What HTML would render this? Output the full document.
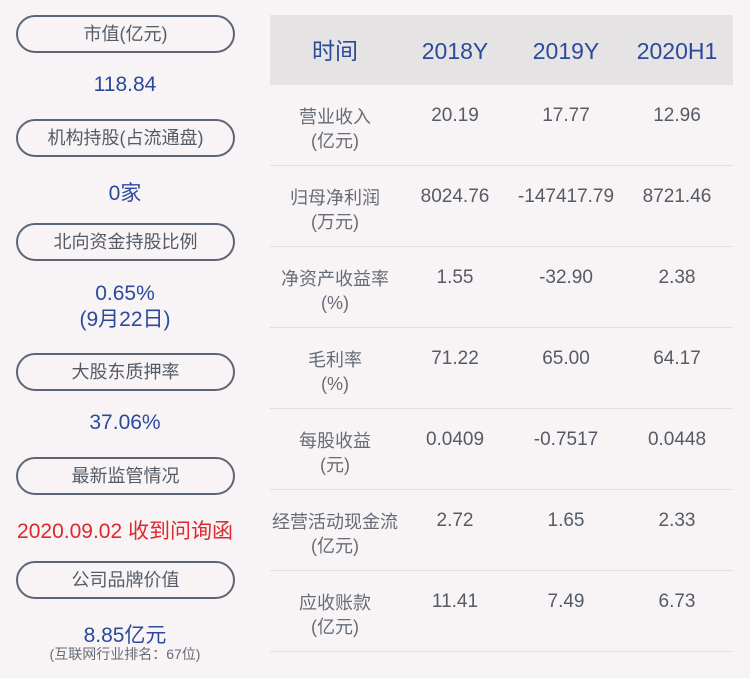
<!DOCTYPE html>
<html><head><meta charset="utf-8"><style>
body{margin:0;width:750px;height:678px;background:#f8f4f5;font-family:"Liberation Sans","Noto Sans CJK SC",sans-serif;position:relative;overflow:hidden}
.p{position:absolute;left:16px;width:215px;height:34px;border:2px solid #5d6675;border-radius:19px;text-align:center;line-height:34px;font-size:18px;color:#555b66}
.v{position:absolute;left:0;width:250px;text-align:center;font-size:21px;color:#2b4a9a}
.hd{position:absolute;left:270px;top:15px;width:463px;height:70px;background:#e5e3e4}
.h{position:absolute;top:16px;height:70px;line-height:70px;width:120px;text-align:center;font-size:23px;color:#2b4a9a}
.r{position:absolute;left:270px;width:463px;height:80px;border-bottom:1px solid #e2dfe0}
.c{position:absolute;top:19px;width:120px;text-align:center;font-size:19px;color:#555b66;line-height:24px}
.l{left:5px;width:120px;top:20px;font-size:18px;color:#666c77}
</style></head><body>
<div class="p" style="top:15px">市值(亿元)</div>
<div class="v" style="top:73px">118.84</div>
<div class="p" style="top:119px">机构持股(占流通盘)</div>
<div class="v" style="top:177px">0家</div>
<div class="p" style="top:223px">北向资金持股比例</div>
<div class="v" style="top:281px;line-height:26px">0.65%<br>(9月22日)</div>
<div class="p" style="top:353px">大股东质押率</div>
<div class="v" style="top:411px">37.06%</div>
<div class="p" style="top:457px">最新监管情况</div>
<div class="v" style="top:515px;color:#e0262e">2020.09.02 收到问询函</div>
<div class="p" style="top:561px">公司品牌价值</div>
<div class="v" style="top:619px">8.85亿元</div>
<div class="v" style="top:644px;font-size:14px;color:#666c77">(互联网行业排名：67位)</div>
<div class="hd"></div>
<div class="h" style="left:275px">时间</div>
<div class="h" style="left:395px">2018Y</div>
<div class="h" style="left:506px">2019Y</div>
<div class="h" style="left:617px">2020H1</div>
<div class="r" style="top:85px"><div class="c l">营业收入<br>(亿元)</div><div class="c" style="left:125px">20.19</div><div class="c" style="left:236px">17.77</div><div class="c" style="left:347px">12.96</div></div>
<div class="r" style="top:166px"><div class="c l">归母净利润<br>(万元)</div><div class="c" style="left:125px">8024.76</div><div class="c" style="left:236px">-147417.79</div><div class="c" style="left:347px">8721.46</div></div>
<div class="r" style="top:247px"><div class="c l" style="left:0;width:130px">净资产收益率<br>(%)</div><div class="c" style="left:125px">1.55</div><div class="c" style="left:236px">-32.90</div><div class="c" style="left:347px">2.38</div></div>
<div class="r" style="top:328px"><div class="c l">毛利率<br>(%)</div><div class="c" style="left:125px">71.22</div><div class="c" style="left:236px">65.00</div><div class="c" style="left:347px">64.17</div></div>
<div class="r" style="top:409px"><div class="c l">每股收益<br>(元)</div><div class="c" style="left:125px">0.0409</div><div class="c" style="left:236px">-0.7517</div><div class="c" style="left:347px">0.0448</div></div>
<div class="r" style="top:490px"><div class="c l" style="left:0;width:130px">经营活动现金流<br>(亿元)</div><div class="c" style="left:125px">2.72</div><div class="c" style="left:236px">1.65</div><div class="c" style="left:347px">2.33</div></div>
<div class="r" style="top:571px"><div class="c l">应收账款<br>(亿元)</div><div class="c" style="left:125px">11.41</div><div class="c" style="left:236px">7.49</div><div class="c" style="left:347px">6.73</div></div>
</body></html>
